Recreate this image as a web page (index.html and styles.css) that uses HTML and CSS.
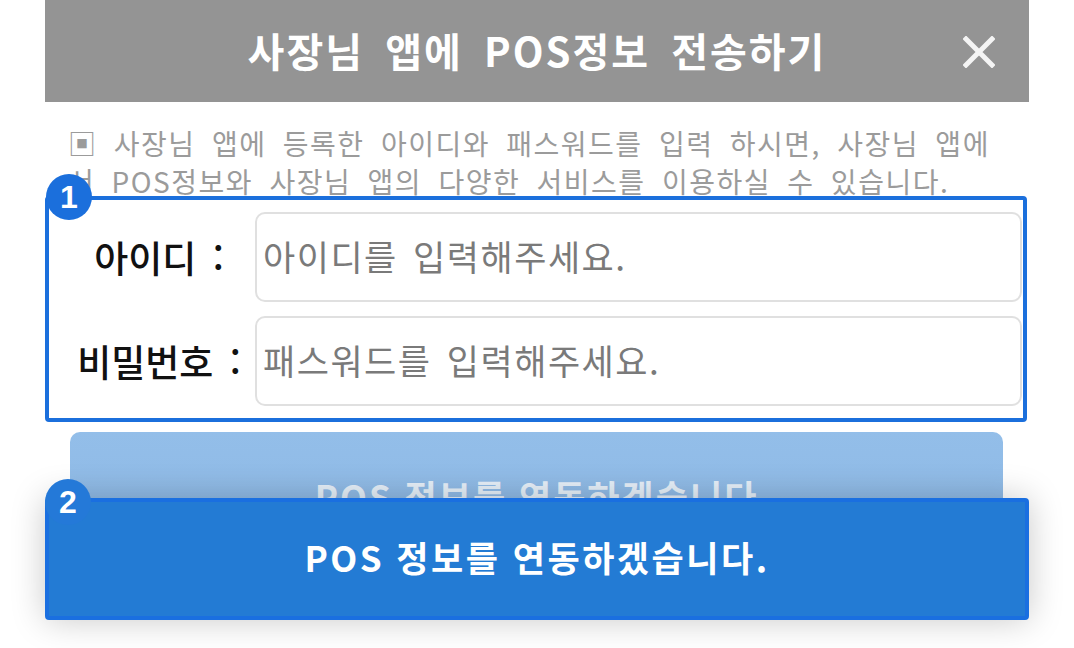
FILE: index.html
```html
<!DOCTYPE html>
<html lang="ko">
<head>
<meta charset="utf-8">
<title>사장님 앱에 POS정보 전송하기</title>
<link rel="stylesheet" href="styles.css">
</head>
<body>
<div class="page">
  <header class="header">
    <span class="spacer"></span>
    <h1 class="title">사장님 앱에 POS정보 전송하기</h1>
    <button class="close" aria-label="닫기">
      <svg viewBox="0 0 32 32" width="32" height="32"><path d="M3 3 L29 29 M29 3 L3 29" stroke="#f4f4f4" stroke-width="5" stroke-linecap="square" fill="none"/></svg>
    </button>
  </header>

  <p class="notice">▣ 사장님 앱에 등록한 아이디와 패스워드를 입력 하시면, 사장님 앱에<br>서 POS정보와 사장님 앱의 다양한 서비스를 이용하실 수 있습니다.</p>

  <div class="form-box">
    <div class="row">
      <label class="label" for="uid">아이디 :</label>
      <input class="field" id="uid" type="text" placeholder="아이디를 입력해주세요.">
    </div>
    <div class="row">
      <label class="label" for="upw">비밀번호 :</label>
      <input class="field" id="upw" type="password" placeholder="패스워드를 입력해주세요.">
    </div>
  </div>

  <div class="faded-btn">POS 정보를 연동하겠습니다</div>

  <div class="callout">POS 정보를 연동하겠습니다.</div>

  <span class="badge badge-1">1</span>
  <span class="badge badge-2">2</span>
</div>
</body>
</html>
```

FILE: styles.css
```css
* { box-sizing: border-box; }

html, body {
  margin: 0;
  padding: 0;
  background: #ffffff;
}

body {
  font-family: "Noto Sans CJK KR", "Noto Sans", sans-serif;
  width: 1074px;
  height: 648px;
  overflow: hidden;
}

.page {
  position: relative;
  width: 984px;
  margin-left: 45px;
}

.header {
  height: 102px;
  background: #949494;
  display: grid;
  grid-template-columns: 1fr auto 1fr;
  align-items: center;
}

.title {
  margin: 0;
  color: #ffffff;
  font-size: 40px;
  font-weight: 700;
  letter-spacing: 2px;
  word-spacing: 8px;
  line-height: 1;
  padding-bottom: 2px;
  white-space: nowrap;
}

.close {
  justify-self: end;
  margin-right: 34px;
  width: 32px;
  height: 32px;
  padding: 0;
  border: 0;
  background: transparent;
  display: flex;
  margin-top: 2px;
}

.notice {
  margin: 0;
  padding: 22px 0 0 23px;
  font-size: 28px;
  line-height: 38px;
  color: #9b9b9b;
  letter-spacing: 1.5px;
  word-spacing: 7px;
  white-space: nowrap;
  height: 100px;
}

.form-box {
  position: relative;
  margin-top: -6px;
  width: 982px;
  background: #ffffff;
  border: 4px solid #1b6fdc;
  border-radius: 4px;
  padding: 12px 1px 12px 0;
  display: flex;
  flex-direction: column;
  gap: 14px;
}

.row {
  display: flex;
  align-items: center;
  height: 90px;
}

.label {
  width: 206px;
  padding-left: 14px;
  text-align: center;
  font-size: 37px;
  font-weight: 500;
  color: #111111;
  white-space: nowrap;
  word-spacing: 6px;
}

.field {
  flex: 1;
  height: 90px;
  border: 2px solid #e0e0e0;
  border-radius: 10px;
  padding: 0 0 4px 6px;
  font-family: inherit;
  font-size: 35px;
  letter-spacing: 1.5px;
  color: #444;
  background: #fff;
  outline: none;
  word-spacing: 4px;
}

.field::placeholder {
  color: #7a7a7a;
  opacity: 1;
}

.faded-btn {
  margin: 10px 0 0 25px;
  width: 933px;
  height: 124px;
  border-radius: 10px;
  background: linear-gradient(#93bee9, #8db8e4);
  color: rgba(255, 255, 255, 0.78);
  font-size: 35px;
  font-weight: 700;
  letter-spacing: 2px;
  display: flex;
  align-items: center;
  justify-content: center;
  padding-top: 2px;
}

.callout {
  position: absolute;
  left: 0;
  top: 498px;
  width: 984px;
  height: 122px;
  background: #237bd4;
  border: 4px solid #1a6fe0;
  border-radius: 4px;
  box-shadow: 0 0 34px rgba(0, 0, 0, 0.22);
  color: #ffffff;
  font-size: 35px;
  font-weight: 700;
  letter-spacing: 2.5px;
  display: flex;
  align-items: center;
  justify-content: center;
  padding-bottom: 6px;
}

.badge {
  position: absolute;
  width: 46px;
  height: 46px;
  border-radius: 50%;
  background: #1b6fdc;
  color: #ffffff;
  font-family: "Liberation Sans", Arial, sans-serif;
  font-weight: 700;
  font-size: 32px;
  display: flex;
  align-items: center;
  justify-content: center;
}

.badge-1 { left: 1px; top: 174px; }
.badge-2 { left: 0; top: 479px; background: #2479d8; }
```
